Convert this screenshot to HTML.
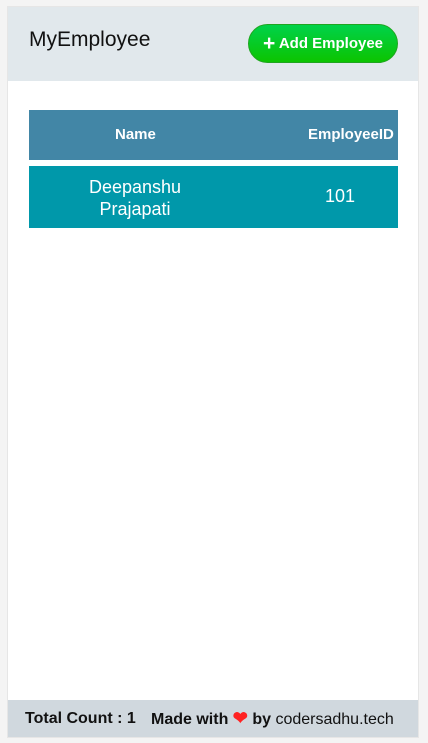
<!DOCTYPE html>
<html><head><style>
body{margin:0;background:#f4f4f4;width:428px;height:743px;overflow:hidden;font-family:"Liberation Sans",sans-serif;}
.card{position:absolute;left:7px;top:6px;width:412px;height:732px;background:#fff;border:1px solid #e6e6e6;box-sizing:border-box;}
.hdr{position:absolute;left:0;top:0;width:100%;height:74px;background:#e1e8ec;}
.title{position:absolute;left:21px;top:21px;font-size:21px;color:#111;}
.btn{position:absolute;left:240px;top:17px;width:150px;height:39px;border-radius:20px;background:linear-gradient(#00d24a,#0cc400);border:1px solid #1fa51f;box-sizing:border-box;color:#fff;font-weight:bold;font-size:15px;line-height:37px;text-align:center;white-space:nowrap;}
.btn b{font-size:21px;vertical-align:-2px;}
.th{position:absolute;left:21px;top:103px;width:369px;height:50px;background:#4286a6;color:#fff;font-weight:bold;font-size:15px;overflow:hidden;}
.tr{position:absolute;left:21px;top:159px;width:369px;height:62px;background:#0098aa;color:#fff;font-size:18px;}
.ftr{position:absolute;left:0;bottom:0;width:100%;height:37px;background:#d0d8de;font-size:16px;color:#111;line-height:37px;white-space:nowrap;}
</style></head><body>
<div class="card">
<div class="hdr"><div class="title">MyEmployee</div><div class="btn"><b>+</b> Add Employee</div></div>
<div class="th"><span style="position:absolute;left:86px;top:16px">Name</span><span style="position:absolute;left:279px;top:16px;white-space:nowrap">EmployeeID</span></div>
<div class="tr"><div style="position:absolute;left:41px;top:10px;width:130px;text-align:center;line-height:22px">Deepanshu<br>Prajapati</div><span style="position:absolute;left:296px;top:20px">101</span></div>
<div class="ftr"><span style="position:absolute;left:17px"><b>Total Count : 1</b></span><span style="position:absolute;left:143px"><b>Made with <span style="color:#f22;font-size:18px">&#10084;</span> by</b> codersadhu.tech</span></div>
</div>
</body></html>
